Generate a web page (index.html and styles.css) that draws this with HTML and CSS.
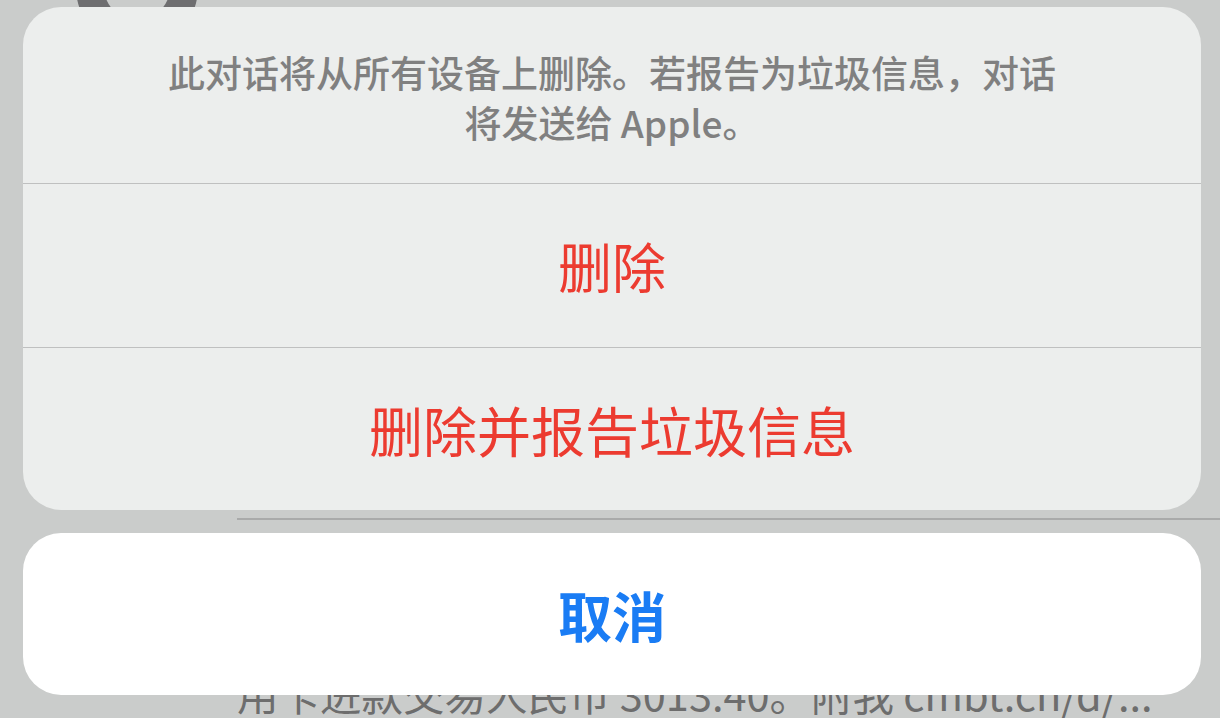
FILE: index.html
```html
<!DOCTYPE html>
<html lang="zh-CN">
<head>
<meta charset="utf-8">
<title>删除对话</title>
<link rel="stylesheet" href="styles.css">
</head>
<body>
<div class="backdrop">
  <div class="avatar">
    <svg width="160" height="40" viewBox="0 0 160 40">
      <circle cx="65" cy="20" r="47" fill="none" stroke="#6e6e70" stroke-width="28"/>
    </svg>
  </div>
  <div class="list-sep"></div>
  <div class="preview">用卡进款交易人民币 3013.40。附我 cmbt.cn/d/...</div>
</div>

<div class="sheet">
  <div class="group">
    <div class="title">此对话将从所有设备上删除。若报告为垃圾信息，对话<br>将发送给 Apple。</div>
    <div class="action destructive">删除</div>
    <div class="action destructive">删除并报告垃圾信息</div>
  </div>
  <div class="cancel">取消</div>
</div>
</body>
</html>
```

FILE: styles.css
```css
html, body {
  margin: 0;
  padding: 0;
}

body {
  width: 1220px;
  height: 718px;
  overflow: hidden;
  background: #cacccb;
  font-family: "Noto Sans CJK SC", "Noto Sans", sans-serif;
  position: relative;
}

.backdrop {
  height: 718px;
  display: flex;
  flex-direction: column;
}

.avatar {
  height: 40px;
  padding-left: 72px;
  margin-top: -33px;
}

.avatar svg {
  display: block;
}

.list-sep {
  margin-top: 511px;
  margin-left: 237px;
  height: 2px;
  flex: none;
  background: #a9aaaa;
}

.preview {
  margin-top: 152px;
  padding-left: 237px;
  font-size: 41.5px;
  line-height: 42px;
  color: #6d6d6d;
  white-space: nowrap;
  flex: none;
}

.sheet {
  position: absolute;
  top: 7px;
  left: 23px;
  width: 1178px;
  display: flex;
  flex-direction: column;
  gap: 23px;
}

.group {
  background: #eceeed;
  border-radius: 38px;
  overflow: hidden;
  display: flex;
  flex-direction: column;
}

.title {
  height: 176px;
  box-sizing: border-box;
  padding-top: 40px;
  text-align: center;
  font-size: 37px;
  line-height: 50px;
  font-weight: 500;
  color: #808080;
}

.action {
  height: 163px;
  border-top: 1px solid #bfc0c0;
  display: flex;
  align-items: center;
  justify-content: center;
  font-size: 54px;
}

.action:last-child {
  height: 162px;
}

.destructive {
  color: #ec3b30;
}

.cancel {
  height: 162px;
  background: #ffffff;
  border-radius: 38px;
  display: flex;
  align-items: center;
  justify-content: center;
  font-size: 54px;
  font-weight: 700;
  color: #1a7cf4;
}
```
